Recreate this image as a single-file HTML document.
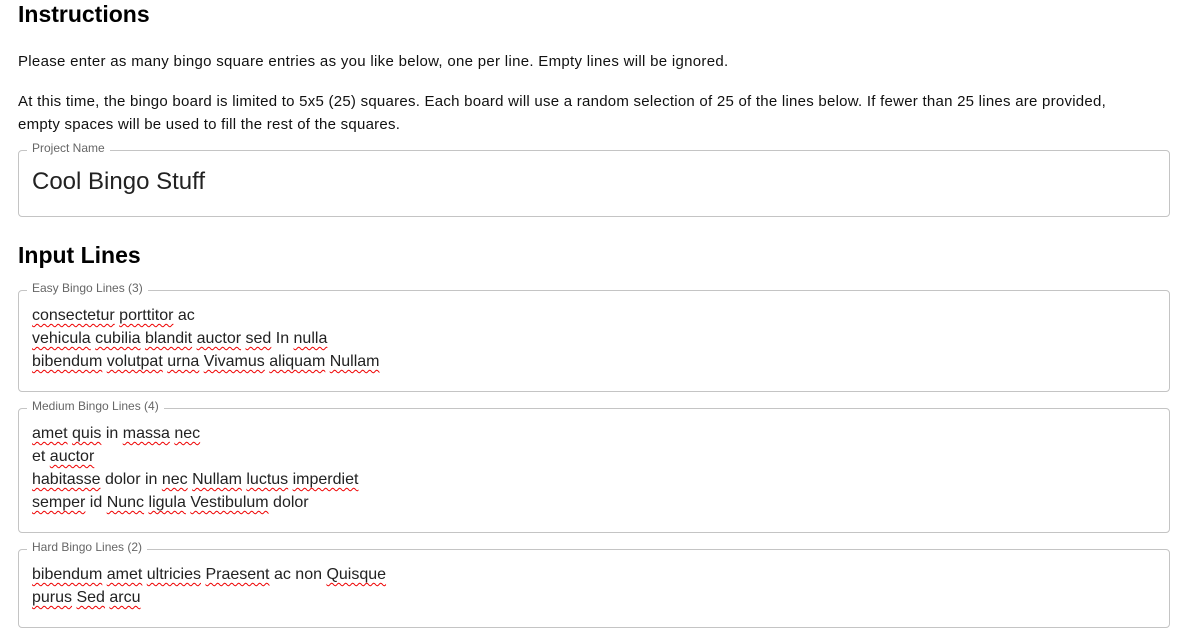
<!DOCTYPE html>
<html><head><style>
body{margin:0;background:#fff;font-family:"Liberation Sans",sans-serif;color:#111;}
.wrap{position:relative;width:1190px;height:644px;overflow:hidden}
.a{position:absolute;left:18px;white-space:nowrap}
h1{margin:0;font-size:23px;font-weight:bold;color:#000}
p{margin:0;font-size:15px;line-height:23px;color:#111}
.fs{position:absolute;left:18px;width:1152px;border:1px solid #c4c4c4;border-radius:4px;box-sizing:border-box}
.lg{position:absolute;top:-11px;left:8px;background:#fff;padding:0 5px;font-size:12px;color:#666;line-height:16px}
.tx{position:absolute;left:13px;font-size:16px;line-height:23px;color:#222;white-space:nowrap}
.w{text-decoration:underline wavy #e00;text-decoration-thickness:1px;text-underline-offset:3px}
</style></head><body><div class="wrap">
<h1 class="a" style="top:1px">Instructions</h1>
<p class="a" style="top:50px;letter-spacing:0.3px">Please enter as many bingo square entries as you like below, one per line. Empty lines will be ignored.</p>
<p class="a" style="top:90px;white-space:normal;width:1125px;letter-spacing:0.25px">At this time, the bingo board is limited to 5x5 (25) squares. Each board will use a random selection of 25 of the lines below. If fewer than 25 lines are provided, empty spaces will be used to fill the rest of the squares.</p>
<div class="fs" style="top:150px;height:67px"><div class="lg">Project Name</div><div class="tx" style="top:17px;font-size:24px;line-height:28px">Cool Bingo Stuff</div></div>
<h1 class="a" style="top:242px">Input Lines</h1>
<div class="fs" style="top:290px;height:102px"><div class="lg">Easy Bingo Lines (3)</div><div class="tx" style="top:13px">
<span class="w">consectetur</span> <span class="w">porttitor</span> ac<br><span class="w">vehicula</span> <span class="w">cubilia</span> <span class="w">blandit</span> <span class="w">auctor</span> <span class="w">sed</span> In <span class="w">nulla</span><br><span class="w">bibendum</span> <span class="w">volutpat</span> <span class="w">urna</span> <span class="w">Vivamus</span> <span class="w">aliquam</span> <span class="w">Nullam</span></div></div>
<div class="fs" style="top:408px;height:125px"><div class="lg">Medium Bingo Lines (4)</div><div class="tx" style="top:13px">
<span class="w">amet</span> <span class="w">quis</span> in <span class="w">massa</span> <span class="w">nec</span><br>et <span class="w">auctor</span><br><span class="w">habitasse</span> dolor in <span class="w">nec</span> <span class="w">Nullam</span> <span class="w">luctus</span> <span class="w">imperdiet</span><br><span class="w">semper</span> id <span class="w">Nunc</span> <span class="w">ligula</span> <span class="w">Vestibulum</span> dolor</div></div>
<div class="fs" style="top:549px;height:79px"><div class="lg">Hard Bingo Lines (2)</div><div class="tx" style="top:13px">
<span class="w">bibendum</span> <span class="w">amet</span> <span class="w">ultricies</span> <span class="w">Praesent</span> ac non <span class="w">Quisque</span><br><span class="w">purus</span> <span class="w">Sed</span> <span class="w">arcu</span></div></div>
</div></body></html>
